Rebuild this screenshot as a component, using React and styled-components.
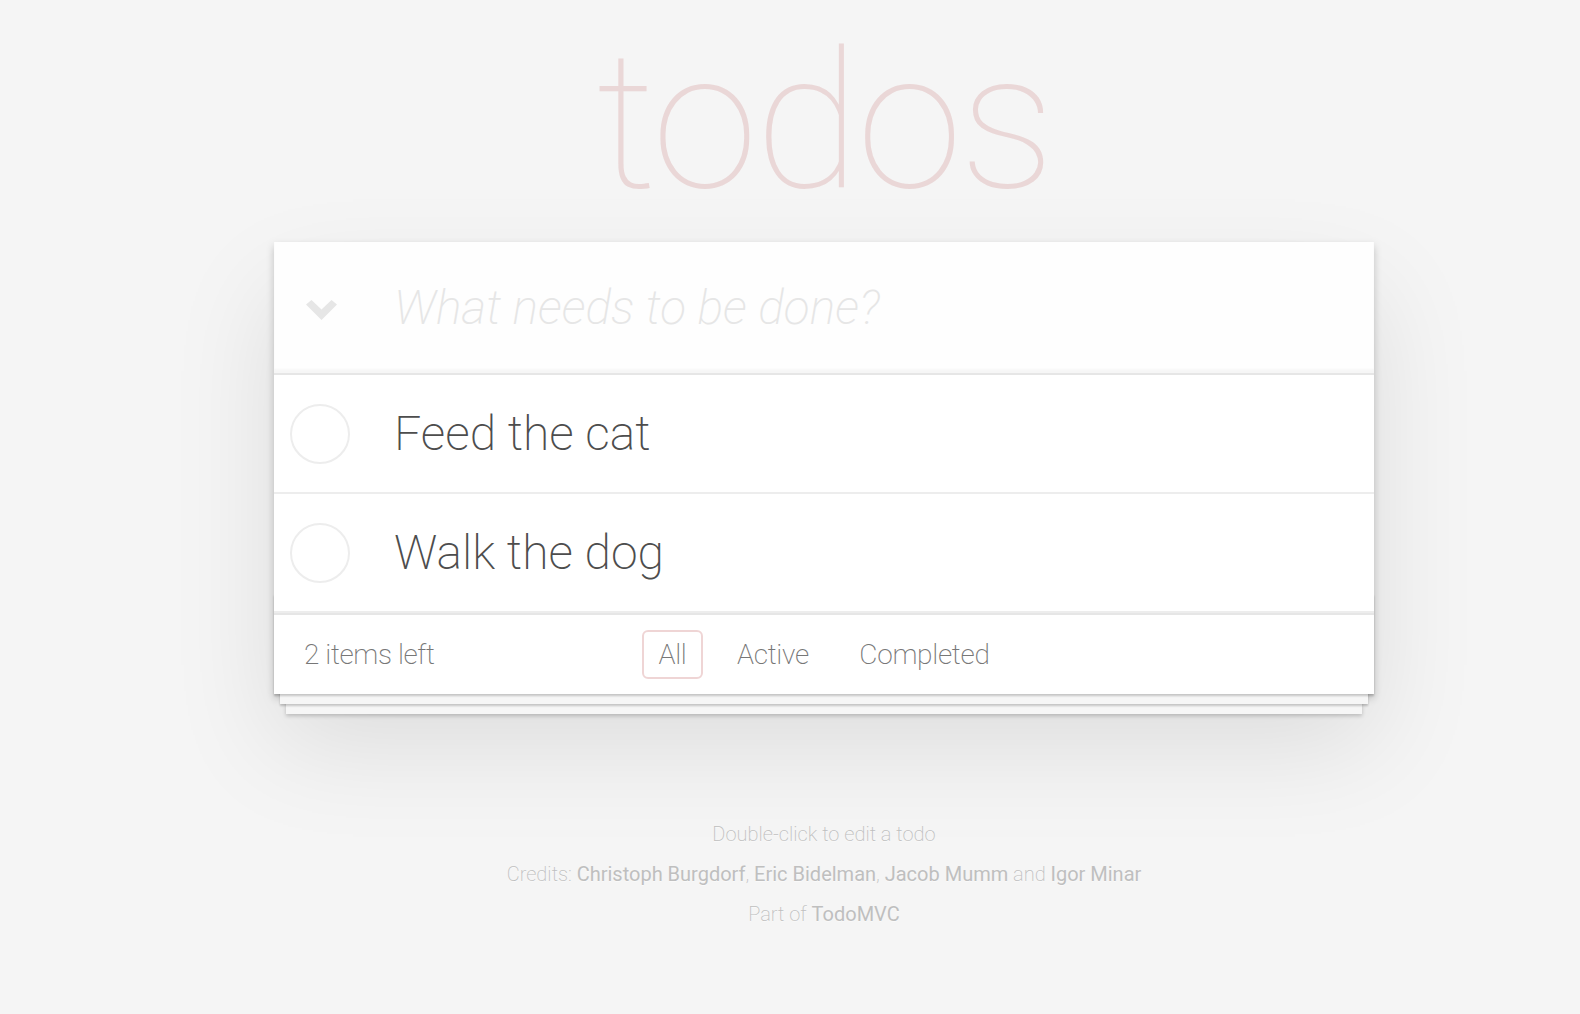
import React from "react";
import styled, { createGlobalStyle, css } from "styled-components";

const GlobalStyle = createGlobalStyle`
  html, body {
    margin: 0;
    padding: 0;
  }
  body {
    background: #f5f5f5;
    font-family: Roboto, "Helvetica Neue", Helvetica, Arial, sans-serif;
    font-size: 28px;
    line-height: 1.4em;
    font-weight: 200;
    color: #4d4d4d;
    -webkit-font-smoothing: antialiased;
  }
`;

const Page = styled.div`
  padding-left: 68px;
  min-height: 1014px;
  box-sizing: border-box;
`;

const Container = styled.section`
  width: 1100px;
  margin: 0 auto;
`;

const Title = styled.h1`
  margin: 0;
  padding-top: 22px;
  height: 200px;
  font-size: 192px;
  line-height: 200px;
  font-weight: 100;
  letter-spacing: -3px;
  text-align: center;
  color: rgba(175, 47, 47, 0.15);
  text-rendering: optimizeLegibility;
`;

const Card = styled.div`
  margin-top: 20px;
  background: #fff;
  position: relative;
  box-shadow: 0 4px 8px 0 rgba(0, 0, 0, 0.2), 0 50px 100px 0 rgba(0, 0, 0, 0.1);
`;

const Header = styled.header`
  display: flex;
  align-items: center;
  background: rgba(0, 0, 0, 0.003);
  box-shadow: inset 0 -4px 2px rgba(0, 0, 0, 0.03);
`;

const ToggleAll = styled.span`
  width: 120px;
  display: flex;
  align-items: center;
  padding: 4px 0 0 32px;
  box-sizing: border-box;
  align-self: stretch;
`;

const NewTodo = styled.input`
  flex: 1;
  min-width: 0;
  border: none;
  outline: none;
  background: transparent;
  margin: 0;
  padding: 32px 32px 32px 0;
  font-family: inherit;
  font-size: 48px;
  line-height: 1.4em;
  height: 131px;
  box-sizing: border-box;
  font-weight: 200;
  color: inherit;
  &::placeholder {
    font-style: italic;
    font-weight: 200;
    color: #e6e6e6;
  }
`;

const Main = styled.section`
  border-top: 2px solid #e6e6e6;
`;

const List = styled.ul`
  margin: 0;
  padding: 0;
  list-style: none;
`;

const Item = styled.li`
  display: flex;
  align-items: center;
  font-size: 48px;
  border-bottom: 2px solid #ededed;
`;

const Check = styled.span`
  flex: none;
  width: 60px;
  height: 60px;
  margin-left: 16px;
  border: 2px solid #ededed;
  border-radius: 50%;
  box-sizing: border-box;
`;

const Label = styled.label`
  padding: 30px 30px 29.5px 44px;
  line-height: 1.2;
  word-break: break-all;
`;

const Footer = styled.footer`
  position: relative;
  display: grid;
  grid-template-columns: 1fr auto 1fr;
  align-items: center;
  height: 40px;
  padding: 19.5px 30px 19.5px;
  border-top: 2px solid #e6e6e6;
  color: #777;
  &::before {
    content: "";
    position: absolute;
    right: 0;
    bottom: 0;
    left: 0;
    height: 100px;
    overflow: hidden;
    pointer-events: none;
    box-shadow: 0 2px 2px rgba(0, 0, 0, 0.2), 0 16px 0 -6px #f6f6f6,
      0 18px 2px -6px rgba(0, 0, 0, 0.2), 0 32px 0 -12px #f6f6f6,
      0 34px 4px -12px rgba(0, 0, 0, 0.2);
  }
`;

const Count = styled.span`
  text-align: left;
  letter-spacing: -0.4px;
`;

const Filters = styled.ul`
  margin: 0;
  padding: 0;
  list-style: none;
  position: relative;
  z-index: 1;
  white-space: nowrap;
  letter-spacing: -0.3px;
`;

const FilterItem = styled.li`
  display: inline;
`;

const FilterLink = styled.a`
  color: inherit;
  margin: 6px;
  padding: 6px 14px;
  text-decoration: none;
  border: 2px solid transparent;
  border-radius: 6px;
  ${(p) =>
    p.$selected &&
    css`
      border-color: rgba(175, 47, 47, 0.2);
    `}
`;

const Info = styled.footer`
  margin-top: 130px;
  color: #bfbfbf;
  font-size: 20px;
  text-shadow: 0 1px 0 rgba(255, 255, 255, 0.5);
  text-align: center;
`;

const InfoLine = styled.p`
  margin: 20px 0;
  line-height: 1;
`;

const InfoLink = styled.a`
  color: inherit;
  text-decoration: none;
  font-weight: 400;
`;

const Chevron = () => (
  <svg width="31" height="20" viewBox="0 0 31 20" aria-hidden="true">
    <path d="M0 4.5 L5.5 0 L15.5 9.5 L25.5 0 L31 4.5 L15.5 20 Z" fill="#e6e6e6" />
  </svg>
);

const todos = ["Feed the cat", "Walk the dog"];

export default function App() {
  return (
    <>
      <GlobalStyle />
      <Page>
        <Container>
          <Title>todos</Title>
          <Card>
            <Header>
              <ToggleAll>
                <Chevron />
              </ToggleAll>
              <NewTodo placeholder="What needs to be done?" />
            </Header>
            <Main>
              <List>
                {todos.map((t) => (
                  <Item key={t}>
                    <Check />
                    <Label>{t}</Label>
                  </Item>
                ))}
              </List>
            </Main>
            <Footer>
              <Count>2 items left</Count>
              <Filters>
                <FilterItem>
                  <FilterLink href="#/" $selected>
                    All
                  </FilterLink>
                </FilterItem>{" "}
                <FilterItem>
                  <FilterLink href="#/active">Active</FilterLink>
                </FilterItem>{" "}
                <FilterItem>
                  <FilterLink href="#/completed">Completed</FilterLink>
                </FilterItem>
              </Filters>
              <span />
            </Footer>
          </Card>
          <Info>
            <InfoLine>Double-click to edit a todo</InfoLine>
            <InfoLine>
              Credits: <InfoLink href="#">Christoph Burgdorf</InfoLink>,{" "}
              <InfoLink href="#">Eric Bidelman</InfoLink>,{" "}
              <InfoLink href="#">Jacob Mumm</InfoLink> and{" "}
              <InfoLink href="#">Igor Minar</InfoLink>
            </InfoLine>
            <InfoLine>
              Part of <InfoLink href="#">TodoMVC</InfoLink>
            </InfoLine>
          </Info>
        </Container>
      </Page>
    </>
  );
}
